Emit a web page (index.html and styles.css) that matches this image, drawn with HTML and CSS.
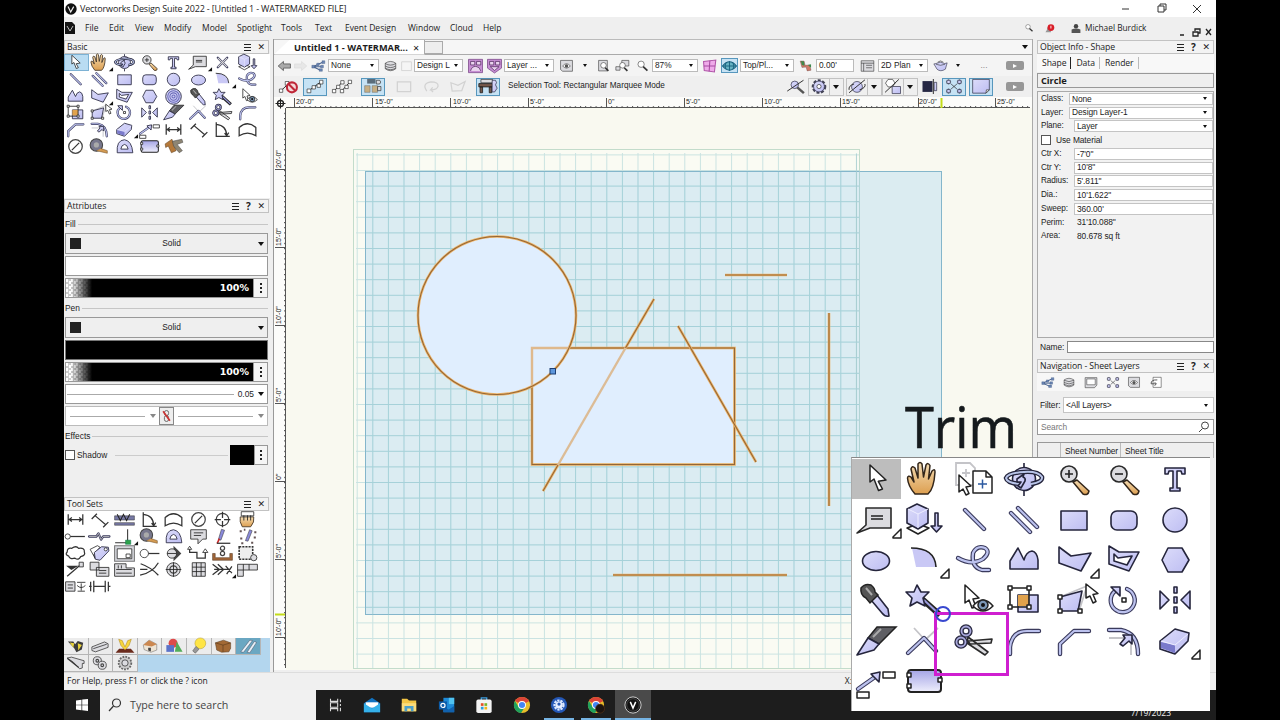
FILE: index.html
```html
<!DOCTYPE html>
<html lang="en">
<head>
    <meta charset="UTF-8">
    <meta name="viewport" content="width=device-width, initial-scale=1.0">
    <title>Vectorworks Design Suite 2022</title>
    <link rel="stylesheet" href="styles.css">
</head>
<body>
    <!-- icon shapes, every one is drawn on a 48x40 box -->
    <svg class="defs" width="0" height="0">
        <defs>
            <linearGradient id="lav" x1="0" y1="0" x2="1" y2="1"><stop offset="0" stop-color="#dcdcfa"/><stop offset="1" stop-color="#bdbdf2"/></linearGradient>
            <linearGradient id="lavDown" x1="0" y1="0" x2="0" y2="1"><stop offset="0" stop-color="#a4a4e6"/><stop offset="1" stop-color="#eeeefc"/></linearGradient>
            <linearGradient id="tan" x1="0" y1="0" x2="0" y2="1"><stop offset="0" stop-color="#f3dcb4"/><stop offset="1" stop-color="#dd9f50"/></linearGradient>

            <g id="arrow"><path class="w" d="M17 6V23L21 20 25.500 31.500 29.500 30 25.300 22.300 33 21Z"/></g>
            <g id="hand"><path class="t" d="M15 35Q8 27 7.500 19 8 16 11 18L14 23 11 10Q12 6 15 9L18 19 18 5Q20 2 22 5L23.500 18 26 6Q28 3 30 6.500L28.500 20 32 12Q35 9 35 13 34 30 28 35Z"/></g>
            <g id="pages"><path class="faint" d="M6 4h14l5 5v17H6z M12 14h8 M16 10v8"/><path class="w" d="M9 16V33L13 30 16 36 19 34.500 16 28 21 27Z"/><path class="w" d="M23 12h13l6 6v16H23z M36 12v6h6"/><path class="b" d="M28 25h9M32.500 20.500v9"/></g>
            <g id="orbit"><path class="p" d="M24 4v5M24 32v5"/><circle class="p" cx="24" cy="20" r="11.500"/><path class="k4" d="M31 25Q43 23 42 18 38 12 24 13 8 14 6 19 7 24 20 25"/><path class="l2" d="M31 25Q43 23 42 18 38 12 24 13 8 14 6 19 7 24 20 25"/><path class="p" d="M17 20l7-5-1 3q3 1 2 4l-4 7-3-2 3-4-4 0z"/></g>
            <g id="zoomin"><path class="t" d="M23 23l4-2 12 11q-1 5-6 3z"/><circle class="g" cx="19" cy="15" r="8"/><path class="k" d="M15 15h8M19 11v8"/></g>
            <g id="zoomout"><path class="t" d="M23 23l4-2 12 11q-1 5-6 3z"/><circle class="g" cx="19" cy="15" r="8"/><path class="k" d="M15 15h8"/></g>
            <g id="text"><path class="p" d="M14 9h20v6h-3l-1-3h-4v17h3v3H19v-3h3V12h-4l-1 3h-3z"/></g>
            <g id="callout"><path class="g" d="M14 8h25v20H18L5 33l9-8z"/><path class="k" d="M19 16h12M19 19h12"/></g>
            <g id="more"><path class="w" d="M41 37l8-8v9h-8z"/></g>
            <g id="morek"><path d="M42 37l8-8v8z" fill="#111"/></g>
            <g id="push"><path class="w" d="M7 28l11-4 11 4-11 6z"/><path class="p" d="M7 9l10-5 11 5v14l-10 6-11-6z"/><path class="l1" d="M8 9l10 5 10-5M18 14v14"/><path class="p" d="M35 13h3v13h4l-5.500 6-5.500-6h4z"/></g>
            <g id="line"><path class="k5" d="M15 10L34 29"/><path class="l3" d="M15 10L34 29"/></g>
            <g id="dline"><path class="k5" d="M11 13L30 32M18 8L37 27"/><path class="l3" d="M11 13L30 32M18 8L37 27"/></g>
            <g id="rect"><path class="p" d="M11 11h26v19H11z"/></g>
            <g id="rrect"><rect class="p" x="11" y="11" width="26" height="19" rx="6"/></g>
            <g id="circle"><circle class="p" cx="24" cy="20" r="12"/></g>
            <g id="ellipse"><ellipse class="p" cx="24" cy="21" rx="13.500" ry="9.500"/></g>
            <g id="arc"><path d="M12 8Q34 8 36 27H16z" fill="#c9c8f5"/><path class="k" d="M11 8Q35 8 36 27"/></g>
            <g id="free"><path class="k5" d="M8 18Q22 26 33 19 41 12 35 8 27 5 23 13 21 27 32 30L39 30"/><path class="l3" d="M8 18Q22 26 33 19 41 12 35 8 27 5 23 13 21 27 32 30L39 30"/></g>
            <g id="curve"><path class="p" d="M10 29V21L18 8 24 20Q26 12 32 11 37 12 38 20V29Z"/></g>
            <g id="poly"><path class="p" d="M9 7l12 9 20-3-10 18-22-8z"/></g>
            <g id="dpoly"><path class="p" fill-rule="evenodd" d="M9 6l10 6 20 0-10 19-20-7zM14 14v7l13 4 5-9-14 2z"/></g>
            <g id="hex"><path class="p" d="M11 20l6-12h14l7 12-7 12H17z"/></g>
            <g id="spiral"><circle class="p" cx="24" cy="20" r="15"/><circle class="s" cx="24" cy="20" r="11"/><circle class="s" cx="24" cy="20" r="7"/><circle class="s" cx="24" cy="20" r="3"/></g>
            <g id="dropper"><path class="p" d="M19 20l6-5 11 14 1 7q-4 1-7-3z"/><path d="M9 8q4-5 10-3 4 3 4 7l3 3-8 8-4-5q-6-3-5-10z" fill="#555" stroke="#222" stroke-width="1.500"/><path d="M14 8l6 7" stroke="#aaa" stroke-width="2"/></g>
            <g id="wand"><path d="M22 19L40 35" stroke="#222" stroke-width="6"/><path d="M24 20L39 34" stroke="#9c9ce0" stroke-width="2"/><path class="p" d="M17 5l4 7 8 0-6 6 2 8-8-4-7 4 2-8-6-6 8 0z"/></g>
            <g id="visible"><path class="w" d="M15 5V23L19 20 22 28 26 27 23 19 29 18Z"/><path class="w" d="M23 26Q33 14 43 26 33 36 23 26Z"/><circle cx="33" cy="25" r="5" fill="#7c97b5" stroke="#222" stroke-width="1.500"/><circle cx="33" cy="25" r="2" fill="#111"/></g>
            <g id="clip"><path class="p" d="M18 15h20v17H18z"/><path d="M18 15h11v11H18z" fill="#e0a24c"/><path class="k" d="M10 8h19v19H10z"/><path class="w" d="M8 6h4v4H8zM27 6h4v4h-4zM8 25h4v4H8zM27 25h4v4h-4z"/></g>
            <g id="reshape"><path class="faint" d="M10 17L37 6 29 31"/><path class="p" d="M10 17l22-6-4 20H10z"/><path class="w" d="M8 15h4v4H8zM8 29h4v4H8zM28 29h4v4h-4zM36 4v14l4-2 3 7 3-1.500-3-7 5-1z"/></g>
            <g id="rotate"><path class="k5" d="M27 9A12 12 0 1 1 15 11"/><path class="l3" d="M27 9A12 12 0 1 1 15 11"/><path class="p" d="M11 7h9v9z"/><path class="w" d="M22 18h4v4h-4z"/></g>
            <g id="mirror"><path class="p" d="M9 11l9 9-9 9zM39 11l-9 9 9 9zM23 7h3v6h-3zM23 17h3v6h-3zM23 27h3v6h-3z"/></g>
            <g id="knife"><path d="M16 17L25 6H44L27 23z" fill="#5f5f64" stroke="#222" stroke-width="1.500"/><path d="M21 16l8-8" stroke="#aaa" stroke-width="2"/><path class="p" d="M5 34L16 17l11 6-5 6z"/></g>
            <g id="trim"><path class="faint" d="M14 7l12 13M38 7L24 20"/><path class="k5" d="M8 32L24 17 36 30"/><path class="l3" d="M8 32L24 17 36 30"/></g>
            <g id="scissors"><path class="g" d="M18 20L42 18 41 22 20 23zM18 16L38 31 35 34 17 22z"/><circle class="ring" cx="16" cy="10" r="4.500"/><circle class="ring" cx="11" cy="21" r="4.500"/><circle class="ring-in" cx="16" cy="10" r="4.500"/><circle class="ring-in" cx="11" cy="21" r="4.500"/></g>
            <g id="fillet"><path class="k5" d="M10 33V26Q12 10 27 10H39"/><path class="l3" d="M10 33V26Q12 10 27 10H39"/></g>
            <g id="chamfer"><path class="k5" d="M10 33V23L24 10H39"/><path class="l3" d="M10 33V23L24 10H39"/></g>
            <g id="offset"><path class="faint" d="M9 17h17l5 5v12"/><path class="k5" d="M9 9h12Q38 12 38 33"/><path class="l3" d="M9 9h12Q38 12 38 33"/><path class="p" d="M20 23l5-6-2-3 9 0 0 9-3-3-6 5z"/></g>
            <g id="eraser"><path class="p" d="M9 20L24 8l14 4-1 8L24 33 9 28z"/><path d="M10 21l14 3v8L10 27z" fill="#7a7acb"/><path class="l1" d="M10 20l14 4L37 13"/></g>
            <g id="align"><path class="k5" d="M6 28L23 16"/><path class="l3" d="M6 28L23 16"/><path class="p" d="M19 13l9-2-1 10-3-3z"/><path class="w" d="M31 11h12v6H31zM5 31h12v6H5z"/></g>
            <g id="plane"><rect x="8" y="9" width="33" height="22" rx="3" fill="url(#lavDown)" stroke="#222" stroke-width="2"/><path class="w" d="M7 12h4v4H7zM7 23h4v4H7zM38 17h4v4h-4z"/></g>
            <g id="locus"><path class="k5" d="M15 11l18 18M33 11L15 29"/><path d="M15 11l18 18M33 11L15 29" stroke="#ddd" stroke-width="2"/></g>
            <g id="dimh"><path class="k3" d="M10 10v20M38 10v20M12 20h24M17 16l-5 4 5 4M31 16l5 4-5 4"/></g>
            <g id="dimd"><path class="k3" d="M9 19l10-10M31 35l10-10M16 13L36 30"/></g>
            <g id="angle"><path class="k3" d="M12 6v27h26M12 10q20 2 20 22M28 27l4 5 4-6"/></g>
            <g id="arcdim"><path class="k3" d="M8 16q16-14 32 0v16q-16-10-32 0z"/></g>
            <g id="dia"><circle class="ring2" cx="24" cy="20" r="13"/><path class="k3" d="M17 27l14-14"/></g>
            <g id="tape"><circle cx="18" cy="17" r="12" fill="#77778c" stroke="#444" stroke-width="2"/><circle cx="18" cy="17" r="5" fill="#aaa"/><path d="M18 28l21 5v-5l-12-4" fill="#d49b52" stroke="#6b4a22"/></g>
            <g id="protractor"><path class="p" fill-rule="evenodd" d="M10 32Q8 8 24 7 38 9 40 32zM17 25h14q-2-9-7-9-6 1-7 9z"/></g>
            <g id="books"><path d="M8 15l13-9 8 22-9 4-6-13-5 3z" fill="#b5793a" stroke="#5b3c1c"/><path d="M22 10l18-4 2 6-11 4 10 12-6 4-11-13z" fill="#8e8674" stroke="#444"/></g>
            <g id="rail"><path d="M5 13h38v8H5zM5 26h38v5H5z" fill="#7779a5" stroke="#333"/><path d="M10 10l6 12 6-12 6 12 6-12" stroke="#222" stroke-width="2" fill="none"/></g>
            <g id="target"><circle class="ring2" cx="24" cy="20" r="12"/><path class="k3" d="M24 5v12M24 23v12M9 20h12M27 20h12"/></g>
            <g id="grab"><path class="t" d="M14 34Q8 24 10 15h26q2 10-6 19z"/><path class="w" d="M12 5h24v8H12z"/><path class="k" d="M17 12v10M24 12v10M30 12v10"/></g>
            <g id="bar"><circle class="w" cx="9" cy="20" r="5"/><path class="k3" d="M14 20h28"/></g>
            <g id="zig"><path class="k5" d="M4 20h14l4-6 5 12 4-6h12"/><path d="M4 20h14l4-6 5 12 4-6h12" stroke="#ccc" fill="none" stroke-width="1.500"/></g>
            <g id="corner"><path d="M6 32h28M30 6v22" stroke="#333" stroke-width="2"/><path d="M26 27h10v8H26z" fill="#2da24a" stroke="#175"/></g>
            <g id="note"><path class="g" d="M9 7h30v18h-7l-9 9v-9H9z"/><path class="k" d="M15 13h18M15 18h14"/></g>
            <g id="pen"><path d="M16 26L22 6l6 2-7 19z" fill="#8a8adb" stroke="#333"/><path d="M14 33l4-9" stroke="#c22" stroke-width="3"/><path class="k3" d="M13 33h26"/></g>
            <g id="dotpen"><path d="M20 28L28 7l5 2-8 20z" fill="#8a8adb" stroke="#333"/><path d="M9 10h4M10 24h4M17 7h3M37 12h4M36 22h4M31 32h4M12 33h4" stroke="#655" stroke-width="4"/></g>
            <g id="cloud"><path class="k3" d="M8 17q0-9 9-7 8-6 13 0 12-2 11 7 3 7-7 9-4 8-11 3-10 3-12-4-8-3-3-8z"/></g>
            <g id="tag"><path class="w" d="M6 12l14-7 5 3-12 14 3 8z"/><path class="p" d="M14 18l14-11 13 1 1 7-17 18-9-2z"/><circle class="w" cx="36" cy="12" r="3"/></g>
            <g id="viewport"><path d="M5 5h38v30H5z" fill="#d5d6dc" stroke="#777" stroke-width="2"/><path class="w" d="M10 11h28v19H10zM27 21h8v7h-8z"/></g>
            <g id="pin"><circle class="w" cx="14" cy="20" r="8"/><path class="k3" d="M22 20h21"/></g>
            <g id="diamond"><path d="M24 5l15 15-15 15z" fill="#444"/><circle class="g" cx="21" cy="20" r="9"/><path class="k" d="M12 20h18"/></g>
            <g id="steps"><path class="k3" d="M7 11v7h14v11h16v-12"/><path class="w" d="M32 18l5-7 5 7zM3 12l4-6 4 6z"/></g>
            <g id="tray"><path d="M5 20h5v8h28v-8h5v13H5z" fill="#a2673a" stroke="#4a2c14"/><circle class="ring2" cx="24" cy="10" r="4"/><circle class="ring2" cx="24" cy="20" r="4"/></g>
            <g id="dotpage"><path d="M8 7h26v24H8z" fill="#eee" stroke="#333" stroke-width="3" stroke-dasharray="4 2"/><circle class="g" cx="36" cy="28" r="6"/></g>
            <g id="flag"><path d="M6 13h24l-14 8z" fill="#333"/><path class="k3" d="M8 33L36 9"/><path class="g" d="M31 6h8v9h-8z"/></g>
            <g id="copybox"><path class="g" d="M6 6h17v15H6zM18 16h24v17H18z"/><path class="k" d="M23 22h14M23 27h14"/></g>
            <g id="keyb"><path class="g" d="M5 9h22v8h16v16H5z"/><path class="k" d="M8 20h30M8 27h30M12 12v6M18 12v6"/></g>
            <g id="cross"><path class="k3" d="M6 31Q30 26 41 7M7 9q20 7 34 22M6 20h14"/></g>
            <g id="bull"><circle class="g" cx="24" cy="20" r="13"/><circle class="ring2" cx="24" cy="20" r="7"/><path class="k" d="M9 20h30M24 6v28"/></g>
            <g id="grid"><path class="g" d="M12 7h25v26H12z"/><path class="k" d="M12 15.500h25M12 24h25M20 7v26M29 7v26"/></g>
            <g id="fish"><path class="k3" d="M5 10l13 10L5 30M15 10l11 10-11 10M8 20h30M30 13l12 14M42 14L32 29"/></g>
            <g id="plan"><path class="g" d="M5 10h38v11H16v12H5z"/><path class="k" d="M16 10v11M27 10v11M5 21h11"/></g>
            <g id="titleb"><path class="g" d="M5 11h18v18H5z"/><path class="k" d="M9 17h10M9 23h10M27 12h16M27 18q8 8 16 0M35 14v14M28 29h14"/></g>
            <g id="barbell"><path class="k3" d="M7 11v18M13 9v22M35 9v22M41 11v18M13 20h22M4 20h5M40 20h5"/></g>

            <g id="pack"><path d="M6 10l12 0 4 6 6-7 12 4-3 15-12 6-5-9z" fill="#3c3c3c"/><path d="M10 12l10 2-2 10zM28 14l9 4-8 12z" fill="#e8d23c"/></g>
            <g id="beam"><path class="g" d="M6 22l28-11 8 4v8L14 33l-8-3z"/><path class="k" d="M9 26l30-10"/></g>
            <g id="lamp"><path d="M3 35l8-9h26l8 9z" fill="#6b2b1c"/><path d="M10 5l8 3 6 14 6-14 8-3-5 14-9 10-9-10z" fill="#f6d53c" stroke="#a07414"/></g>
            <g id="house"><path d="M9 18l13-11 17 9v13l-13 5-15-6z" fill="#eee4d4" stroke="#555"/><path d="M9 18l13-11 17 9-11 5z" fill="#cc8850"/><path d="M20 24h6v8l-6-2z" fill="#444"/></g>
            <g id="rgb"><circle cx="22" cy="14" r="10" fill="#dd4b4b"/><path d="M30 10l13 23H26z" fill="#52ad59"/><path d="M7 18h17v15H7z" fill="#5a72c9"/></g>
            <g id="bulb"><circle cx="27" cy="14" r="12" fill="#ffe545" stroke="#aa9020"/><path d="M17 21l7 6-8 9-6-5z" fill="#999" stroke="#444"/></g>
            <g id="crate"><path d="M7 13l18-6 16 6v12l-4 8-16 1-11-5z" fill="#a26935" stroke="#432a12"/><path d="M7 13l17 5 17-5M24 18v15" stroke="#432a12" fill="none"/></g>
            <g id="pencils"><path d="M8 33L28 7l6 1L14 34zM22 34L38 10l5 2-15 23z" fill="#e7f0f8" stroke="#445"/></g>
            <g id="steel"><path class="g" d="M4 9l10-2 28 8v6l-4 0v10l-6 2-14-15z"/><path class="k3" d="M5 10l25 20"/></g>
            <g id="nuts"><circle class="g" cx="18" cy="15" r="9"/><circle class="g" cx="29" cy="25" r="9"/><circle class="ring2" cx="29" cy="25" r="3"/><circle class="ring2" cx="18" cy="15" r="3"/></g>
            <g id="gear"><circle cx="24" cy="20" r="14" fill="#ccc" stroke="#666" stroke-width="4" stroke-dasharray="4 2.500"/><circle class="g" cx="24" cy="20" r="7"/></g>

            <g id="back"><path d="M6 20L21 7v7h20v12H21v7z" fill="#aaa" stroke="#444" stroke-width="2"/></g>
            <g id="next"><path d="M42 20L27 7v7H7v12h20v7z" fill="#e7e7e7" stroke="#ccc"/></g>
            <g id="classes"><path d="M8 22L36 9M10 22l22 0M10 23l20 9" stroke="#46618e" stroke-width="3"/><path d="M5 18h8v8H5zM19 12h7v7h-7zM34 5h8v8h-8zM30 18h8v7h-8zM26 28h9v7h-9z" fill="#6d87b5" stroke="#2f4a78"/></g>
            <g id="stack"><path class="g" d="M9 12v16q15 11 30 0V12q-15-10-30 0z"/><path class="k" d="M9 13q15 9 30 0M9 20q15 9 30 0M9 26q15 9 30 0"/></g>
            <g id="blank"><path d="M10 8h28v25H10z" fill="#f5f5f5" stroke="#ccc" stroke-width="2"/></g>
            <g id="mag1"><path d="M4 1h40v38H4z" fill="#c68ed3" stroke="#713c80" stroke-width="2"/><path d="M10 7h12v10H10zM27 7h12v10H27zM10 34q3-13 15-13 11 1 14 13" fill="#ead4ef" stroke="#4b2358" stroke-width="2"/></g>
            <g id="mag2"><path d="M4 1h40v25L24 40 4 26z" fill="#c68ed3" stroke="#713c80" stroke-width="2"/><path d="M10 7h12v10H10zM27 7h12v10H27zM12 22h25l-13 11z" fill="#ead4ef" stroke="#4b2358" stroke-width="2"/></g>
            <g id="saved"><path class="g" d="M7 4h34v31H13l-6-5z"/><path class="w" d="M13 20q11-13 22 0-11 12-22 0z"/><circle cx="24" cy="20" r="5" fill="#555"/></g>
            <g id="fitpage"><path class="g" d="M10 4h25v30H10z"/><circle class="w" cx="24" cy="18" r="8"/><path d="M29 25l9 9" stroke="#333" stroke-width="5"/></g>
            <g id="fitobj"><path class="g" d="M22 4h20v16H22zM5 22h12v10H5z"/><circle class="w" cx="24" cy="18" r="8"/><path d="M29 25l9 9" stroke="#333" stroke-width="5"/></g>
            <g id="mag"><circle class="w" cx="20" cy="15" r="9"/><path d="M26 22l12 11" stroke="#333" stroke-width="5"/></g>
            <g id="persp"><path d="M7 7l35-4-4 34-29-4z" fill="#efaaea" stroke="#b055a8" stroke-width="3"/><path d="M25 5l-2 30M8 20h32" stroke="#a549a0" stroke-width="3"/></g>
            <g id="globe"><path d="M4 20Q24-4 44 20 24 44 4 20z" fill="#66b2c3" stroke="#155e7c" stroke-width="3"/><path d="M5 20h38M24 6v28M14 11q-5 9 0 18M34 11q5 9 0 18" stroke="#155e7c" stroke-width="2.500" fill="none"/></g>
            <g id="rotview"><path d="M6 6h11l3 12 13-1 4 15-11 2-3-11-12 1z" fill="#d07a68" stroke="#533"/><path d="M8 6l9 1 1 12-7-2zM28 17l9-2v10z" fill="#3c8a4c"/></g>
            <g id="table"><path class="g" d="M6 5h36v30H6z"/><path class="k" d="M6 12h36M13 12v23M20 18h17M20 25h17"/></g>
            <g id="teapot"><path class="p" d="M11 13q12-8 25 0l7-2-5 18q-14 9-24 0L5 14z"/><path class="k" d="M16 9q8-7 16 0M11 15q13 6 26 0"/></g>
            <g id="chain"><path class="k3" d="M8 31L38 9"/><path class="w" d="M5 26h9v9H5zM17 18h8v8h-8zM35 5h8v9h-8zM29 14h8v8h-8z"/></g>
            <g id="nochain"><path class="k3" d="M4 31l20-19"/><path class="w" d="M1 26h8v8H1zM15 8h9v9h-9z"/><circle cx="31" cy="22" r="12" fill="#f4d9d9" stroke="#bf2738" stroke-width="5"/><path d="M23 14l16 16" stroke="#bf2738" stroke-width="5"/></g>
            <g id="chain3"><path class="k3" d="M4 32L26 8M22 32L44 8"/><path class="w" d="M1 27h8v8H1zM11 17h8v8h-8zM21 6h8v8h-8zM20 27h8v8h-8zM31 17h8v8h-8zM39 5h8v8h-8z"/></g>
            <g id="cubes"><path d="M4 18h13v16H4zM22 18h13v16H22z" fill="#c6ae84" stroke="#555"/><path d="M10 2h20v11H10z" fill="#5b6d7c"/><path class="g" d="M32 5h8q5 4 0 9h-8zM35 20h8v10h-8z"/></g>
            <g id="marqrect"><path d="M8 9h32v23H8z" class="pale"/></g>
            <g id="lasso"><path d="M14 31Q1 13 24 9q18 0 17 10-2 9-18 9l5-6M23 28l6 5" class="pale"/></g>
            <g id="polylas"><path d="M7 11l17 6 17-9-8 22-23 1z" class="pale"/></g>
            <g id="bench"><path d="M2 13h33v8H2zM5 21h6v14H5zM27 21h6v14h-6z" fill="#76584b" stroke="#222" stroke-width="2"/><path d="M7 3h28v8H7z" class="g"/><path class="p" d="M34 5h8q5 6 0 11l4 8-6 9h-6z"/></g>
            <g id="snapmag"><circle class="p" cx="21" cy="16" r="9"/><path class="k3" d="M3 31L42 5"/><path d="M27 22l16 14" stroke="#555" stroke-width="6"/></g>
            <g id="cog"><circle cx="24" cy="20" r="15" fill="#c9c8f5" stroke="#445" stroke-width="5" stroke-dasharray="7 4"/><circle class="p" cx="24" cy="20" r="13"/><circle class="w" cx="24" cy="20" r="5"/></g>
            <g id="planet"><circle class="p" cx="24" cy="21" r="13"/><path class="k3" d="M5 35L43 4M5 28q-2-10 12-14M43 14q3 9-13 14"/></g>
            <g id="halfhex"><path class="w" d="M6 12l6-9h11l6 9-6 9H12z"/><path class="p" d="M22 20h20v17H22z"/><path class="k3" d="M5 34L38 3"/></g>
            <g id="darksq"><path d="M6 7h24v26H6z" fill="#252744"/><path class="p" d="M34 10h6v20h-6z"/><path class="k3" d="M32 2v36"/></g>
            <g id="nodes"><path class="k" d="M5 9h12M11 3v12M31 9h12M37 3v12M5 31h12M11 25v12M31 31h12M37 25v12M17 14l14 12M31 14L17 26"/><path class="p" d="M7 5h8v8H7zM33 5h8v8h-8zM7 27h8v8H7zM33 27h8v8h-8z"/></g>
            <g id="sheet"><path class="p" d="M4 3h40v25l-8 8H4z"/><path class="w" d="M36 36l1-8h7z"/></g>
            <g id="sheetw"><path class="g" d="M6 5h36v23l-7 8H6z"/><path class="w" d="M11 9h26v18H11z"/></g>
            <g id="ref"><path class="w" d="M15 4h25v31H15z"/><path class="k3" d="M28 12q-20-1-19 12h15M20 19l5 5-5 6"/></g>
            <g id="vlogo"><circle cx="24" cy="20" r="19" fill="#111"/><path d="M14 12l9 18 10-18" fill="none" stroke="#eee" stroke-width="4"/></g>
        </defs>
    </svg>

    <div class="app">
        <header class="titlebar">
            <svg class="ico logo" viewBox="4 0 40 40"><use href="#vlogo"/></svg>
            <span class="caption">Vectorworks Design Suite 2022 - [Untitled 1 - WATERMARKED FILE]</span>
            <svg class="winbtns" viewBox="0 0 90 12"><path d="M6 6h7"/><path d="M43 3h5v6h-6v-6zM44 3v-2h6v6h-2"/><path d="M77 2l8 8M85 2l-8 8"/></svg>
        </header>

        <nav class="menubar">
            <svg class="doc-ico" viewBox="0 0 10 12"><path d="M0 0h7l3 3v9H0z" fill="#151515"/><path d="M2 4l3 5 3-5" stroke="#bbb" fill="none"/></svg>
            <span>File</span><span>Edit</span><span>View</span><span>Modify</span><span>Model</span><span>Spotlight</span><span>Tools</span><span>Text</span><span>Event Design</span><span>Window</span><span>Cloud</span><span>Help</span>
            <svg class="ico m-search" viewBox="0 0 48 40"><use href="#mag"/></svg>
            <svg class="m-bell" viewBox="0 0 12 12"><path d="M1 10q2-1 2-5h4v5z" fill="#999"/><circle cx="7" cy="5" r="3.700" fill="#d91e28"/><path d="M7 3v3" stroke="#fff"/></svg>
            <svg class="m-user" viewBox="0 0 10 10"><circle cx="5" cy="3" r="2" fill="#444"/><path d="M1 9V6q4-2 8 0v3z" fill="#555"/></svg>
            <span class="user">Michael Burdick</span>
            <svg class="mdi" viewBox="0 0 34 9"><path d="M2 7h4M15 4h5v4h-5zM17 3V1h5v4h-2M28 1l5 6M33 1l-5 6"/></svg>
        </nav>

        <main class="workspace">
            <aside class="left">
                <h2 class="pal-head"><span>Basic</span><i class="burger"></i><b class="x">✕</b></h2>
                <div class="palette basic" data-icons="arrow* hand+ orbit zoomin text callout+ locus push line dline rect rrect circle ellipse arc+ free curve poly+ dpoly hex spiral dropper wand visible clip reshape rotate mirror knife trim scissors fillet chamfer offset eraser+ align dimh dimd angle arcdim dia tape protractor plane books"></div>

                <h2 class="pal-head"><span>Attributes</span><i class="burger"></i><b class="q">?</b><b class="x">✕</b></h2>
                <section class="attributes">
                    <div class="legend">Fill</div>
                    <div class="pick"><i class="swatch"></i><span>Solid</span><i class="caret"></i></div>
                    <div class="colour white"></div>
                    <div class="opacity"><div class="ramp">100%</div><i class="dots"></i></div>
                    <div class="legend">Pen</div>
                    <div class="pick"><i class="swatch"></i><span>Solid</span><i class="caret"></i></div>
                    <div class="colour black"></div>
                    <div class="opacity"><div class="ramp">100%</div><i class="dots"></i></div>
                    <div class="weight"><i class="rule"></i><span>0.05</span><i class="caret"></i></div>
                    <div class="markers">
                        <div class="marker"><i class="rule"></i><i class="caret grey"></i></div>
                        <svg class="link" viewBox="0 0 14 19"><rect x="4.500" y="3" width="5" height="6" rx="2.500"/><rect x="4.500" y="9" width="5" height="7" rx="2.500"/><path d="M3 4l8 11"/></svg>
                        <div class="marker"><i class="rule"></i><i class="caret grey"></i></div>
                    </div>
                    <div class="legend effects">Effects</div>
                    <div class="shadow"><i class="box"></i><span>Shadow</span><i class="rule"></i><i class="chip"></i><i class="dots"></i></div>
                </section>

                <h2 class="pal-head"><span>Tool Sets</span><i class="burger"></i><b class="x">✕</b></h2>
                <div class="palette sets" data-icons="dimh dimd rail angle arcdim dia target grab bar zig corner+ tape protractor note pen dotpen cloud tag viewport pin diamond steps tray dotpage flag copybox keyb cross bull grid fish+ plan titleb barbell"></div>
                <div class="palette tabs" data-icons="pack beam lamp house rgb bulb crate pencils* steel nuts gear"></div>
            </aside>

            <section class="document">
                <div class="doctabs">
                    <div class="doctab">Untitled 1 - WATERMAR...<b>✕</b></div>
                    <div class="newtab"></div>
                    <i class="caret"></i>
                </div>
                <div class="viewbar">
                    <svg class="ico" viewBox="0 0 48 40"><use href="#back"/></svg>
                    <svg class="ico" viewBox="0 0 48 40"><use href="#next"/></svg>
                    <svg class="ico" viewBox="0 0 48 40"><use href="#classes"/></svg>
                    <div class="combo">None<i class="caret"></i></div>
                    <svg class="ico" viewBox="0 0 48 40"><use href="#stack"/></svg>
                    <svg class="ico" viewBox="0 0 48 40"><use href="#blank"/></svg>
                    <div class="combo">Design L<i class="caret"></i></div>
                    <svg class="ico" viewBox="0 0 48 40"><use href="#mag1"/></svg>
                    <svg class="ico" viewBox="0 0 48 40"><use href="#mag2"/></svg>
                    <div class="combo">Layer ...<i class="caret"></i></div>
                    <svg class="ico" viewBox="0 0 48 40"><use href="#saved"/></svg>
                    <div class="drop"><i class="caret"></i></div>
                    <svg class="ico" viewBox="0 0 48 40"><use href="#fitpage"/></svg>
                    <svg class="ico" viewBox="0 0 48 40"><use href="#fitobj"/></svg>
                    <svg class="ico" viewBox="0 0 48 40"><use href="#mag"/></svg>
                    <div class="combo">87%<i class="caret"></i></div>
                    <svg class="ico" viewBox="0 0 48 40"><use href="#persp"/></svg>
                    <div class="on"><svg class="ico" viewBox="0 0 48 40"><use href="#globe"/></svg></div>
                    <div class="combo">Top/Pl...<i class="caret"></i></div>
                    <svg class="ico" viewBox="0 0 48 40"><use href="#rotview"/></svg>
                    <div class="combo">0.00'</div>
                    <svg class="ico" viewBox="0 0 48 40"><use href="#table"/></svg>
                    <div class="combo">2D Plan<i class="caret"></i></div>
                    <svg class="ico" viewBox="0 0 48 40"><use href="#teapot"/></svg>
                    <div class="drop"><i class="caret"></i></div>
                    <span class="ellipsis">...</span>
                    <i class="play"></i>
                </div>
                <div class="modebar">
                    <svg class="ico" viewBox="0 0 48 40"><use href="#nochain"/></svg>
                    <div class="on"><svg class="ico" viewBox="0 0 48 40"><use href="#chain"/></svg></div>
                    <svg class="ico" viewBox="0 0 48 40"><use href="#chain3"/></svg>
                    <div class="on"><svg class="ico" viewBox="0 0 48 40"><use href="#cubes"/></svg></div>
                    <svg class="ico" viewBox="0 0 48 40"><use href="#marqrect"/></svg>
                    <svg class="ico" viewBox="0 0 48 40"><use href="#lasso"/></svg>
                    <svg class="ico" viewBox="0 0 48 40"><use href="#polylas"/></svg>
                    <div class="on"><svg class="ico" viewBox="0 0 48 40"><use href="#bench"/></svg></div>
                    <span class="hint">Selection Tool: Rectangular Marquee Mode</span>
                    <svg class="ico" viewBox="0 0 48 40"><use href="#snapmag"/></svg>
                    <div class="split"><svg class="ico" viewBox="0 0 48 40"><use href="#cog"/></svg><i class="caret"></i></div>
                    <div class="split"><svg class="ico" viewBox="0 0 48 40"><use href="#planet"/></svg><i class="caret"></i></div>
                    <div class="split"><svg class="ico" viewBox="0 0 48 40"><use href="#halfhex"/></svg><i class="caret"></i></div>
                    <svg class="ico" viewBox="0 0 48 40"><use href="#darksq"/></svg>
                    <div class="on"><svg class="ico" viewBox="0 0 48 40"><use href="#nodes"/></svg></div>
                    <div class="on"><svg class="ico" viewBox="0 0 48 40"><use href="#sheet"/></svg></div>
                    <i class="play"></i>
                </div>

                <!-- rulers and drawing area -->
                <svg class="canvas" viewBox="274 97 758 573">
                    <defs>
                        <pattern id="gridPat" x="356.700" y="170" width="15.600" height="15.600" patternUnits="userSpaceOnUse"><path d="M0 .5H15.600M.5 0V15.600" fill="none" stroke="#8fc6cc" stroke-width="1"/></pattern>
                        <pattern id="tickH" x="294" y="105" width="5.200" height="3" patternUnits="userSpaceOnUse"><path d="M0 1h1v2H0z" fill="#555"/></pattern>
                        <pattern id="tickV" x="283" y="170" width="3" height="5.200" patternUnits="userSpaceOnUse"><path d="M1 0h2v1H1z" fill="#555"/></pattern>
                    </defs>
                    <rect x="274" y="97" width="758" height="573" fill="#f9f9f0"/>
                    <rect x="353.500" y="149.500" width="506" height="519" fill="#fafbf3" stroke="#c3dccb"/>
                    <rect x="356" y="153" width="503" height="515" fill="url(#gridPat)" opacity=".45"/>
                    <rect x="365.500" y="171.500" width="576" height="443" fill="#c4e2f2" fill-opacity=".58" stroke="#84b6cb"/>
                    <rect x="366" y="172" width="493" height="443" fill="url(#gridPat)" opacity=".6"/>
                    <path d="M856.500 154V668M859.500 171V615" stroke="#a9cdd0" fill="none" opacity=".7"/>

                    <g class="shapes">
                        <rect x="532" y="348" width="202.500" height="116.500" class="halo" fill="#e0eefe"/>
                        <rect x="532" y="348" width="202.500" height="116.500" class="core"/>
                        <circle cx="497" cy="315.500" r="79" class="halo" fill="#e0eefe"/>
                        <path d="M532 385.500V348H569" stroke="#dfb98d" stroke-width="2.400" fill="none"/>
                        <circle cx="497" cy="315.500" r="79" class="core"/>
                        <path class="halo" d="M543 491L558 465M625.500 348L654 299M678 326L756 462M725 275H787M829 313V506M613 575H787"/>
                        <path class="core" d="M543 491L558 465M625.500 348L654 299M678 326L756 462M725 275H787M829 313V506M613 575H787"/>
                        <path d="M558 465L625.500 348" stroke="#dcbc96" stroke-width="2.400"/>
                        <rect x="550" y="368.500" width="5.500" height="5.500" fill="#5d96dc" stroke="#1d3f73"/>
                    </g>
                    <text class="trim" x="905" y="448" textLength="112" lengthAdjust="spacingAndGlyphs">Trim</text>

                    <path d="M274 97h758v11H286V670H274z" fill="#fcfcfa"/>
                    <rect x="290" y="105" width="740" height="3" fill="url(#tickH)"/>
                    <rect x="283" y="112" width="3" height="554" fill="url(#tickV)"/>
                    <path d="M286 107.500H1030M285.500 108V668" stroke="#555" stroke-width="1"/>
                    <path d="M294.500 98v10M372.500 98v10M450.500 98v10M528.500 98v10M606.500 98v10M684.500 98v10M762.500 98v10M840.500 98v10M918.500 98v10M995.500 98v10M275 169.500h10M275 247.500h10M275 325.500h10M275 403.500h10M275 481.500h10M275 559.500h10M275 637.500h10" stroke="#555"/>
                    <path d="M941.500 98v10M275 614.500h10" stroke="#c4dc18" stroke-width="2"/>
                    <g class="ruler-h">
                        <text x="296" y="104">20'-0"</text><text x="375" y="104">15'-0"</text><text x="453" y="104">10'-0"</text><text x="530" y="104">5'-0"</text><text x="608" y="104">0"</text><text x="686" y="104">5'-0"</text><text x="764" y="104">10'-0"</text><text x="842" y="104">15'-0"</text><text x="919" y="104">20'-0"</text><text x="997" y="104">25'-0"</text>
                    </g>
                    <g class="ruler-v">
                        <text transform="translate(281 168) rotate(-90)">20'-0"</text><text transform="translate(281 246) rotate(-90)">15'-0"</text><text transform="translate(281 324) rotate(-90)">10'-0"</text><text transform="translate(281 402) rotate(-90)">5'-0"</text><text transform="translate(281 480) rotate(-90)">0"</text><text transform="translate(281 558) rotate(-90)">5'-0"</text><text transform="translate(281 636) rotate(-90)">10'-0"</text>
                    </g>
                    <circle cx="280.500" cy="103.500" r="3" fill="none" stroke="#222" stroke-width="1.300"/><path d="M280.500 98.500v10M275.500 103.500h10" stroke="#222"/>
                </svg>
            </section>

            <aside class="right">
                <h2 class="pal-head"><span>Object Info - Shape</span><i class="burger"></i><b class="q">?</b><b class="x">✕</b></h2>
                <div class="oi-tabs"><span>Shape</span><span>Data</span><span>Render</span></div>
                <div class="oi-title">Circle</div>
                <div class="oi">
                    <div class="row wide"><label>Class:</label><div class="field">None<i class="caret"></i></div></div>
                    <div class="row wide"><label>Layer:</label><div class="field">Design Layer-1<i class="caret"></i></div></div>
                    <div class="row"><label>Plane:</label><div class="field">Layer<i class="caret"></i></div></div>
                    <div class="check"><i class="box"></i>Use Material</div>
                    <div class="row"><label>Ctr X:</label><div class="field">-7'0"</div></div>
                    <div class="row"><label>Ctr Y:</label><div class="field">10'8"</div></div>
                    <div class="row"><label>Radius:</label><div class="field">5'.811"</div></div>
                    <div class="row"><label>Dia.:</label><div class="field">10'1.622"</div></div>
                    <div class="row"><label>Sweep:</label><div class="field">360.00'</div></div>
                    <div class="row"><label>Perim:</label><div class="value">31'10.088"</div></div>
                    <div class="row"><label>Area:</label><div class="value">80.678 sq ft</div></div>
                </div>
                <div class="name"><label>Name:</label><div class="field"></div></div>

                <h2 class="pal-head"><span>Navigation - Sheet Layers</span><i class="burger"></i><b class="q">?</b><b class="x">✕</b></h2>
                <div class="nav-tabs">
                    <svg class="ico" viewBox="0 0 48 40"><use href="#classes"/></svg>
                    <svg class="ico" viewBox="0 0 48 40"><use href="#stack"/></svg>
                    <svg class="ico" viewBox="0 0 48 40"><use href="#sheetw"/></svg>
                    <svg class="ico" viewBox="0 0 48 40"><use href="#nodes"/></svg>
                    <svg class="ico" viewBox="0 0 48 40"><use href="#saved"/></svg>
                    <svg class="ico" viewBox="0 0 48 40"><use href="#ref"/></svg>
                </div>
                <div class="filter"><label>Filter:</label><div class="field">&lt;All Layers&gt;<i class="caret"></i></div></div>
                <div class="search">Search<svg viewBox="0 0 12 12"><circle cx="7" cy="4.500" r="3.500"/><path d="M4.500 7.500L1 11"/></svg></div>
                <div class="thead"><span></span><span>Sheet Number</span><span>Sheet Title</span></div>
            </aside>
        </main>

        <div class="status"><span>For Help, press F1 or click the ? icon</span><span class="coord">X:</span></div>

        <footer class="taskbar">
            <div class="start"><svg viewBox="0 0 12 12"><path d="M0 1.500l5.500-.8v5H0zM6.200.6L12 0v5.700H6.200zM0 6.300h5.500v5L0 10.500zM6.200 6.300H12V12l-5.800-.8z" fill="#fff"/></svg></div>
            <div class="tb-search"><svg viewBox="0 0 14 14"><circle cx="8.500" cy="5" r="4"/><path d="M5.500 8L1 13"/></svg>Type here to search</div>
            <div class="app-btn"><svg viewBox="0 0 20 20"><path d="M5 3v3h8V3M5 17v-3h8v3M5 7.500h8v5H5zM16 4v3M16 9v2M16 13v4" fill="none" stroke="#ddd" stroke-width="1.200"/></svg></div>
            <div class="app-btn"><svg viewBox="0 0 20 20"><path d="M1 8l9-6 9 6v10H1z" fill="#1272bf"/><path d="M3 7h14v6H3z" fill="#fff"/><path d="M1 8l9 6 9-6v10H1z" fill="#35b1ea"/></svg></div>
            <div class="app-btn"><svg viewBox="0 0 20 20"><path d="M2 3h6l2 2h8v12H2z" fill="#f3c545"/><path d="M2 8h16v9H2z" fill="#fbdc7b"/><path d="M5 11h10v6h-3v-3H8v3H5z" fill="#4b9fca"/></svg></div>
            <div class="app-btn"><svg viewBox="0 0 20 20"><path d="M6 2h12v16H6z" fill="#1d8bd8"/><path d="M12 2h6v7h-6z" fill="#50c3f0"/><path d="M6 12l6 3 6-4v7H6z" fill="#1161ad"/><rect x="1" y="6" width="9" height="9" fill="#0c5ca8"/><circle cx="5.500" cy="10.500" r="2.300" fill="none" stroke="#fff" stroke-width="1.300"/></svg></div>
            <div class="app-btn"><svg viewBox="0 0 20 20"><path d="M7 5V2h6v3" fill="none" stroke="#3d9cdc" stroke-width="1.500"/><rect x="1.500" y="4" width="17" height="15" rx="2" fill="#f3f3f3"/><path d="M6.500 8h3v3h-3z" fill="#e74d26"/><path d="M10.500 8h3v3h-3z" fill="#79b52b"/><path d="M6.500 12h3v3h-3z" fill="#2b9fe2"/><path d="M10.500 12h3v3h-3z" fill="#f6b618"/></svg></div>
            <div class="app-btn"><svg viewBox="0 0 20 20"><use href="#chrome"/></svg></div>
            <div class="app-btn run"><svg viewBox="0 0 20 20"><circle cx="10" cy="10" r="9" fill="#2457b5"/><circle cx="10" cy="10" r="5" fill="none" stroke="#dbe8ff" stroke-width="2.500" stroke-dasharray="2.500 1"/><circle cx="10" cy="10" r="4" fill="#e7efff"/><circle cx="10" cy="9" r="1.800" fill="#2457b5"/></svg></div>
            <div class="app-btn run"><svg viewBox="0 0 20 20"><g id="chrome"><circle cx="10" cy="10" r="9" fill="#e8bd2a"/><path d="M10 10L2.200 5.500A9 9 0 0 1 17.800 5.500z" fill="#db4437"/><path d="M2.200 5.500A9 9 0 0 0 9 19l4-6.500L6 12z" fill="#1fa15d"/><path d="M17.800 5.500H10v4z" fill="#db4437"/><circle cx="10" cy="10" r="4.400" fill="#fff"/><circle cx="10" cy="10" r="3.400" fill="#4285f4"/></g><circle class="avatar" cx="14.500" cy="14" r="5"/></svg></div>
            <div class="app-btn run active"><svg viewBox="0 0 20 20"><circle cx="10" cy="10" r="9" fill="#111" stroke="#ddd"/><circle cx="10" cy="10" r="7" fill="none" stroke="#777" stroke-width=".6"/><path d="M7 6.500l3 7 3-7" fill="none" stroke="#fff" stroke-width="1.600"/></svg></div>
            <div class="clock">7/19/2023</div>
        </footer>

        <!-- enlarged tool palette laid over the window -->
        <div class="popup">
            <div class="palette big" data-icons="arrow* hand pages orbit zoomin zoomout text callout+ push line dline rect rrect circle ellipse arc+ free curve poly+ dpoly hex dropper wand visible clip reshape rotate mirror knife trim scissors fillet chamfer offset eraser+ align plane"></div>
            <i class="marker-box"></i>
            <i class="cursor-ring"></i>
        </div>
    </div>

    <script>
        // fill the palettes: * marks the active tool, + adds the flyout corner
        document.querySelectorAll('.palette').forEach(function (pal) {
            const corner = pal.classList.contains('big') ? 'more' : 'morek';
            pal.innerHTML = pal.dataset.icons.split(' ').map(function (item) {
                const id = item.replace(/[*+]/, '');
                const active = item.endsWith('*') ? ' active' : '';
                const more = item.endsWith('+') ? `<use href="#${corner}"/>` : '';
                return `<div class="tool${active}"><svg class="ico" viewBox="0 0 48 40"><use href="#${id}"/>${more}</svg></div>`;
            }).join('');
        });
    </script>
</body>
</html>
```
FILE: styles.css
```css
* {
    box-sizing: border-box;
}
body {
    margin: 0;
    background: #000;
    color: #1c1c1c;
    font-family: "Open Sans", "Noto Sans", sans-serif;
    font-size: 9px;
    line-height: 1;
    overflow: hidden;
}
i, b {
    font-style: normal;
    flex: none;
}
svg {
    display: block;
    flex: none;
}
.defs {
    position: absolute;
}
.app {
    position: relative;
    width: 1152px;
    height: 720px;
    margin: 0 auto;
    display: flex;
    flex-direction: column;
    background: #efefef;
}

/* icon paints */
.ico {
    width: 20px;
    height: 17px;
    overflow: visible;
}
.p { fill: url(#lav); stroke: #25253c; stroke-width: 1.6; stroke-linejoin: round; }
.w { fill: #fff; stroke: #222; stroke-width: 1.5; stroke-linejoin: round; }
.g { fill: #dcdce0; stroke: #2a2a2a; stroke-width: 1.6; stroke-linejoin: round; }
.t { fill: url(#tan); stroke: #33261a; stroke-width: 1.5; stroke-linejoin: round; }
.k { fill: none; stroke: #222; stroke-width: 1.6; }
.k3 { fill: none; stroke: #333; stroke-width: 2.4; }
.k4 { fill: none; stroke: #25253c; stroke-width: 4.5; }
.k5 { fill: none; stroke: #3a3a5c; stroke-width: 4.4; stroke-linecap: round; stroke-linejoin: round; }
.l1 { fill: none; stroke: #eef; stroke-width: 1; }
.l2 { fill: none; stroke: #b8c4e8; stroke-width: 2; }
.l3 { fill: none; stroke: #bcc2ee; stroke-width: 2.2; stroke-linecap: round; stroke-linejoin: round; }
.s { fill: none; stroke: #6a6ab8; stroke-width: 2; }
.b { fill: none; stroke: #2c5aa0; stroke-width: 1.5; }
.faint { fill: none; stroke: #c4c4c8; stroke-width: 1.8; }
.pale { fill: none; stroke: #d2d2d2; stroke-width: 3; }
.ring { fill: none; stroke: #2c2c44; stroke-width: 4.4; }
.ring-in { fill: none; stroke: #a9a9dc; stroke-width: 1.8; }
.ring2 { fill: none; stroke: #444; stroke-width: 2.4; }

.caret {
    width: 0;
    height: 0;
    border: 3px solid transparent;
    border-top: 4px solid #111;
    border-bottom: 0;
}
.caret.grey {
    border-top-color: #888;
}

/* title and menu */
.titlebar {
    height: 17px;
    background: #fff;
    display: flex;
    align-items: center;
}
.logo {
    width: 12px;
    height: 12px;
    margin-left: 1px;
}
.caption {
    margin-left: 3px;
    flex: 1;
    white-space: nowrap;
    letter-spacing: -0.16px;
}
.winbtns {
    width: 90px;
    height: 12px;
    margin-right: 10px;
    fill: none;
    stroke: #333;
}
.menubar {
    height: 22px;
    display: grid;
    grid-template-columns: 20px 24px 26px 29px 38px 35px 44px 34px 30px 63px 42px 33px 540px 21px 26px 15px 93px 34px;
    align-items: center;
    padding-left: 1px;
    white-space: nowrap;
    font-size: 8.5px;
}
.doc-ico {
    width: 10px;
    height: 12px;
}
.m-search {
    width: 12px;
    height: 10px;
}
.m-bell, .m-user {
    width: 12px;
    height: 11px;
}
.user {
    font-size: 8.3px;
}
.mdi {
    width: 34px;
    height: 9px;
    margin-top: 9px;
    fill: none;
    stroke: #222;
    stroke-width: 1.3;
}

.workspace {
    height: 633px;
    display: grid;
    grid-template-columns: 206px 3px 760px 3px 180px;
}
.left { grid-column: 1; }
.document { grid-column: 3; }
.right { grid-column: 5; }

.pal-head {
    height: 14px;
    margin: 1px 1px 0 0;
    padding: 0 3px 0 2px;
    display: flex;
    align-items: center;
    gap: 7px;
    border: 1px solid #c2c2c2;
    background: #f3f3f3;
    font-size: 8.7px;
    font-weight: 400;
    letter-spacing: -0.1px;
}
.pal-head span {
    flex: 1;
    white-space: nowrap;
}
.pal-head .x {
    font: bold 9px/1 "DejaVu Sans", sans-serif;
}
.pal-head .q {
    font-size: 10px;
}
.burger {
    width: 7px;
    height: 7px;
    background: repeating-linear-gradient(#222 0 1px, #f3f3f3 1px 3px);
}

/* tool palettes */
.palette {
    display: grid;
    grid-template-columns: repeat(8, 24.6px);
    grid-auto-rows: 16.8px;
    align-content: start;
    background: #fff;
}
.tool {
    display: grid;
    place-content: center;
}
.palette .ico {
    width: 25px;
    height: 21px;
}
.basic {
    height: 144px;
}
.basic .active {
    background: #b9dcf2;
    outline: 1px solid #7db2d4;
    outline-offset: -1px;
}
.basic .ico, .sets .ico {
    margin-left: -2px;
}
.sets {
    height: 127px;
}
.tabs {
    height: 34px;
    background: #b3d6ee;
}
.tabs .tool {
    background: #ececec;
    border: 1px solid #b5b5b5;
    border-width: 0 1px 1px 0;
}
.tabs .active {
    background: #6aa7c2;
}
.tabs .ico {
    width: 22px;
    height: 18px;
}

/* attributes */
.attributes {
    height: 283px;
    padding: 5px 2px 0 1px;
    font-family: "Liberation Sans", Arial, sans-serif;
    font-size: 8.4px;
}
.legend {
    height: 12px;
    display: flex;
    align-items: center;
    gap: 2px;
}
.legend::after {
    content: "";
    flex: 1;
    border-top: 1px solid #c6c6c6;
}
.pick, .colour, .opacity, .weight {
    height: 20px;
    border: 1px solid #999;
    margin-bottom: 2px;
    display: flex;
    align-items: center;
}
.pick {
    margin-top: 3px;
    height: 21px;
    padding: 0 3px 0 4px;
}
.pick span {
    flex: 1;
    text-align: center;
    padding-left: 4px;
}
.swatch {
    width: 11px;
    height: 11px;
    background: #222;
}
.colour.white {
    background: #fff;
}
.colour.black {
    background: #000;
    border-color: #777;
}
.ramp {
    flex: 1;
    height: 18px;
    padding: 4px 4px 0 0;
    text-align: right;
    color: #fff;
    font: bold 9.5px/1 "DejaVu Sans", sans-serif;
    background:
        linear-gradient(90deg, #0000 0 5px, #000 26px),
        repeating-conic-gradient(#ccc 0 25%, #fff 0 50%) 0 0 / 5px 5px;
}
.dots {
    align-self: stretch;
    width: 14px;
    border-left: 1px solid #999;
    background: radial-gradient(circle, #222 1px, transparent 1.3px) 50% 50% / 4px 4px no-repeat,
        radial-gradient(circle, #222 1px, transparent 1.3px) 50% 3px / 4px 4px no-repeat,
        radial-gradient(circle, #222 1px, #0000 1.3px) 50% 11px / 4px 4px no-repeat, #f5f5f5;
}
.opacity + .legend {
    margin-top: 4px;
}
.rule {
    flex: 1;
    border-top: 1px solid #aaa;
}
.weight {
    background: #fff;
    padding: 0 3px 0 1px;
    gap: 4px;
}
.markers {
    display: flex;
    height: 20px;
    border: 1px solid #bbb;
}
.marker {
    flex: 1;
    display: flex;
    align-items: center;
    gap: 5px;
    padding: 0 3px 0 4px;
    background: #fff;
}
.marker:first-child {
    flex: none;
    width: 93px;
}
.link {
    width: 15px;
    height: 18px;
    border: 1px solid #888;
    background: #eee;
    fill: none;
    stroke: #555;
}
.link path {
    stroke: #c33;
    stroke-width: 2;
}
.effects {
    margin-top: 4px;
}
.shadow {
    height: 20px;
    margin-top: 3px;
    display: flex;
    align-items: center;
    gap: 2px;
}
.shadow .rule {
    margin: 0 0 0 6px;
    border-color: #ccc;
}
.shadow .dots {
    border: 1px solid #999;
    margin-left: -2px;
}
.box {
    width: 10px;
    height: 10px;
    border: 1px solid #555;
    background: #fff;
}
.chip {
    width: 24px;
    height: 20px;
    background: #000;
}

/* document window */
.document {
    border-left: 1px solid #999;
    border-right: 1px solid #aaa;
}
.doctabs {
    height: 16px;
    display: flex;
    align-items: center;
    border-top: 1px solid #bbb;
    border-bottom: 1px solid #aaa;
    background: #f6f6f6;
}
.doctab {
    width: 151px;
    height: 15px;
    padding: 3px 0 0 20px;
    background: #fff;
    border-right: 1px solid #aaa;
    clip-path: polygon(16px 0, 100% 0, 100% 100%, 0 100%);
    font: bold 9.2px/1 "Open Sans", sans-serif;
    white-space: nowrap;
}
.doctab b {
    margin-left: 5px;
    font: bold 8px/1 "DejaVu Sans", sans-serif;
}
.newtab {
    width: 18px;
    height: 13px;
    border: 1px solid #aaa;
    border-left: 0;
    background: #eee;
}
.doctabs .caret {
    margin: 0 4px 0 auto;
}
.viewbar, .modebar {
    height: 21px;
    display: grid;
    align-items: center;
    justify-items: center;
    padding-left: 1px;
    font: 8.3px/1 "Liberation Sans", Arial, sans-serif;
}
.viewbar {
    grid-template-columns: 18px 15px 20px 54px 17px 15px 52px 18px 20px 53px 19px 17px 20px 19px 20px 49px 17px 22px 57px 19px 41px 21px 53px 19px 15px 38px 24px;
    background: #f4f4f4;
}
.modebar {
    grid-template-columns: 28px 24px 30px 32px 29px 26px 28px 31px 282px 22px 38px 37px 36px 23px 26px 27px 33px;
}
.viewbar .ico {
    width: 17px;
    height: 14px;
}
.modebar .ico {
    width: 20px;
    height: 17px;
}
.combo {
    justify-self: stretch;
    margin: 0 3px 0 0;
    height: 13px;
    padding: 0 4px 0 2px;
    display: flex;
    align-items: center;
    justify-content: space-between;
    background: #fff;
    border: 1px solid #bbb;
    white-space: nowrap;
}
.drop {
    display: grid;
    place-content: center;
}
.on {
    height: 18px;
    width: 24px;
    display: grid;
    place-content: center;
    background: #c6e2f4;
    border: 1px solid #5797bd;
}
.viewbar .on {
    width: 17px;
    height: 15px;
}
.hint {
    justify-self: start;
    padding-left: 5px;
    font-size: 8.2px;
    white-space: nowrap;
}
.split {
    width: 36px;
    height: 18px;
    display: flex;
    align-items: center;
    justify-content: space-between;
    padding-right: 4px;
    border: 1px solid #c2c2c2;
    background: linear-gradient(90deg, transparent 20px, #c2c2c2 20px 21px, transparent 21px);
}
.ellipsis {
    color: #888;
}
.play {
    width: 18px;
    height: 9px;
    border-radius: 2px;
    background: #979797;
    display: grid;
    place-content: center;
    justify-self: end;
    margin-right: 3px;
}
.play::after {
    content: "";
    border: 2.5px solid transparent;
    border-left: 4px solid #fff;
    border-right: 0;
}
.canvas {
    width: 758px;
    height: 573px;
}
.halo {
    stroke: #eeb468;
    stroke-width: 2.6;
}
.core {
    fill: none;
    stroke: #946636;
    stroke-width: 1.1;
}
.trim {
    font: 57px "Open Sans", "Noto Sans", sans-serif;
    fill: #151a1d;
    stroke: #151a1d;
    stroke-width: .6;
}
.ruler-h text, .ruler-v text {
    font: 7px "Liberation Sans", Arial, sans-serif;
    fill: #222;
}

/* object info */
.right {
    padding: 0 2px 0 1px;
    font: 8.4px/1 "Liberation Sans", Arial, sans-serif;
    letter-spacing: -0.08px;
}
.right .pal-head {
    font-family: "Open Sans", sans-serif;
    margin-right: 0;
}
.oi-tabs {
    height: 18px;
    display: flex;
    align-items: center;
    font: 8.6px/1 "Open Sans", sans-serif;
    background: #f8f8f8;
}
.oi-tabs span {
    padding: 2px 4px 2px 5px;
    border-right: 1px solid #bbb;
}
.oi-tabs span:first-child {
    border-color: #222;
}
.oi-title {
    height: 15px;
    margin-top: 1px;
    padding: 2px 3px;
    border: 1px solid #999;
    font: bold 9.3px/1 "Open Sans", sans-serif;
}
.oi {
    height: 247px;
    margin-top: 3px;
    border: 1px solid #aaa;
    background: #f2f2f2;
}
.row {
    height: 13.75px;
    display: grid;
    grid-template-columns: 33px 1fr;
    align-items: center;
    padding-left: 3px;
}
.row.wide {
    grid-template-columns: 28px 1fr;
}
.row label {
    font-size: 8.2px;
}
.value {
    padding-left: 3px;
}
.field {
    height: 12px;
    display: flex;
    align-items: center;
    justify-content: space-between;
    padding: 0 5px 0 2px;
    background: #fff;
    border: 1px solid #c4c4c4;
}
.right .caret, .viewbar .caret {
    border-width: 3px 2.5px 0;
}
.check {
    height: 13.75px;
    display: flex;
    align-items: center;
    gap: 5px;
    padding-left: 3px;
}
.name {
    height: 18px;
    display: grid;
    grid-template-columns: 27px 1fr;
    align-items: center;
    padding-left: 3px;
}
.name .field {
    border-color: #888;
}
.name + .pal-head {
    margin-top: 3px;
}
.nav-tabs {
    height: 18px;
    display: grid;
    grid-template-columns: repeat(6, 21.6px);
    place-items: center;
    background: #f7f7f7;
}
.nav-tabs .ico {
    width: 16px;
    height: 13px;
}
.filter {
    display: grid;
    grid-template-columns: 23px 1fr;
    align-items: center;
    margin-top: 6px;
    padding-left: 3px;
}
.filter .field {
    height: 16px;
}
.search {
    height: 16px;
    margin-top: 6px;
    padding: 0 3px;
    display: flex;
    align-items: center;
    justify-content: space-between;
    background: #fff;
    border: 1px solid #999;
    color: #777;
}
.search svg {
    width: 12px;
    height: 12px;
    fill: none;
    stroke: #444;
}
.thead {
    height: 16px;
    margin-top: 7px;
    display: grid;
    grid-template-columns: 23px 60px 1fr;
    align-items: center;
    border: 1px solid #999;
    border-width: 1px 0 0 1px;
}
.thead span {
    height: 15px;
    padding: 4px 0 0 4px;
    border-right: 1px solid #bbb;
    white-space: nowrap;
}

/* status bar and windows taskbar */
.status {
    height: 18px;
    padding: 0 0 0 3px;
    display: flex;
    align-items: center;
    background: #f0f0f0;
    border-top: 1px solid #ddd;
    font-size: 8.5px;
}
.coord {
    margin-left: 637px;
}
.taskbar {
    height: 30px;
    display: flex;
    background: #1d1d1d;
}
.start {
    width: 36px;
    display: grid;
    place-content: center;
}
.start svg {
    width: 12px;
    height: 12px;
}
.tb-search {
    width: 216px;
    display: flex;
    align-items: center;
    gap: 8px;
    padding-left: 8px;
    background: #f1f1f1;
    color: #444;
    font-size: 10.7px;
}
.tb-search svg {
    width: 14px;
    height: 14px;
    fill: none;
    stroke: #333;
    stroke-width: 1.2;
}
.app-btn {
    width: 37.4px;
    display: grid;
    place-content: center;
}
.app-btn svg {
    width: 18px;
    height: 18px;
}
.run {
    background: linear-gradient(#76b4e4, #76b4e4) 50% 100% / 30px 2px no-repeat;
}
.run.active {
    width: 36px;
    background: linear-gradient(#76b4e4, #76b4e4) 50% 100% / 36px 2px no-repeat, #4a4a4a;
}
.avatar {
    fill: #1c1410;
    stroke: #6b3a16;
    stroke-width: .6;
}
.clock {
    margin: 19px 45px 0 auto;
    color: #eee;
    font-size: 8.5px;
}

/* enlarged palette */
.popup {
    position: absolute;
    left: 787px;
    top: 457px;
    width: 359px;
    height: 254px;
    background: #fff;
    border-top: 1px solid #888;
    border-left: 1px solid #aaa;
}
.big {
    grid-template-columns: 47px repeat(6, 50.1px);
    grid-auto-rows: 40.4px;
    padding-top: 1px;
}
.big .ico {
    width: 48px;
    height: 40px;
}
.big .active {
    width: 49px;
    background: #bdbdbd;
}
.marker-box {
    position: absolute;
    left: 82px;
    top: 154px;
    width: 75px;
    height: 64px;
    border: 3px solid #cf1fd0;
}
.cursor-ring {
    position: absolute;
    left: 83px;
    top: 148px;
    width: 16px;
    height: 16px;
    border: 2px solid #3848cf;
    border-radius: 50%;
}
```
